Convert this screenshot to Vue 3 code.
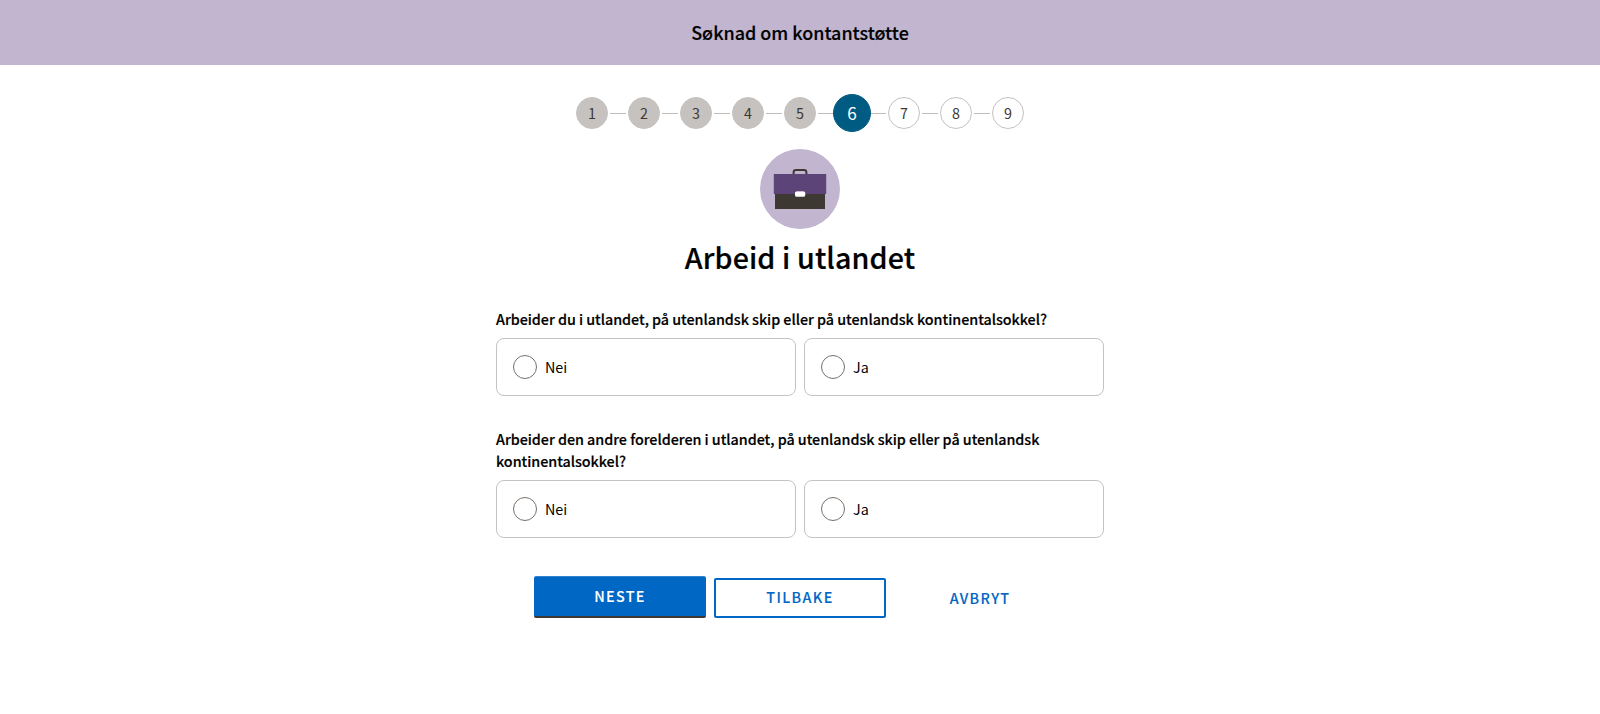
<script setup>
const steps = Array.from({ length: 9 }, (_, i) => i + 1)
const current = 6
const questions = [
  {
    id: 'soker',
    lines: ['Arbeider du i utlandet, på utenlandsk skip eller på utenlandsk kontinentalsokkel?'],
  },
  {
    id: 'forelder',
    lines: ['Arbeider den andre forelderen i utlandet, på utenlandsk skip eller på utenlandsk', 'kontinentalsokkel?'],
  },
]
const answers = ['Nei', 'Ja']
</script>

<template>
  <div class="page">
    <header class="banner"><span class="banner-title">Søknad om kontantstøtte</span></header>
    <main class="content">
      <ol class="stepper">
        <li
          v-for="n in steps"
          :key="n"
          class="step"
          :class="{ done: n < current, active: n === current }"
        >
          <span class="dot">{{ n }}</span>
        </li>
      </ol>

      <svg class="illustration" viewBox="0 0 80 80" aria-hidden="true">
        <circle cx="40" cy="40" r="40" fill="#c1b5d0" />
        <path d="M33.6 26v-2.6q0-2.4 2.4-2.4h8q2.4 0 2.4 2.4V26" fill="none" stroke="#3e3832" stroke-width="2" />
        <rect x="15" y="44" width="50" height="16" rx=".6" fill="#3e3832" />
        <rect x="13.8" y="25" width="52.4" height="20" rx=".6" fill="#5c4378" />
        <rect x="35" y="42.4" width="10.2" height="5.6" rx="1.6" fill="#b9b5b0" />
        <rect x="35" y="42.4" width="10.2" height="4.8" rx="1.6" fill="#fff" />
      </svg>
      <h1 class="heading">Arbeid i utlandet</h1>

      <form class="form">
        <fieldset v-for="q in questions" :key="q.id" class="question">
          <legend class="legend"><span v-for="line in q.lines" :key="line" class="legend-line">{{ line }}</span></legend>
          <div class="options">
            <label v-for="a in answers" :key="a" class="option">
              <input class="radio" type="radio" :name="q.id" />
              <span class="option-text">{{ a }}</span>
            </label>
          </div>
        </fieldset>
      </form>

      <div class="actions">
        <button class="btn primary" type="button">NESTE</button>
        <button class="btn secondary" type="button">TILBAKE</button>
        <button class="btn flat" type="button">AVBRYT</button>
      </div>
    </main>
  </div>
</template>

<style>
body {
  margin: 0;
  background: #fff;
}
</style>

<style scoped>
.page {
  height: 714px;
  overflow: hidden;
  color: #000;
  font-family: "Source Sans Pro", "Noto Sans CJK SC", "Noto Sans", sans-serif;
  font-size: 14.33px;
  font-variant-ligatures: none;
}
.banner {
  height: 65px;
  display: flex;
  align-items: center;
  justify-content: center;
  background: #c1b5d0;
}
.banner-title {
  font-size: 17.95px;
  font-weight: 500;
  line-height: 24px;
  padding-bottom: 1px;
  -webkit-text-stroke: 0.15px currentColor;
}
.content {
  width: 608px;
  margin: 0 auto;
}
.stepper {
  list-style: none;
  display: flex;
  justify-content: center;
  gap: 20px;
  height: 38px;
  margin: 29px 0 0;
  padding: 0;
}
.step {
  position: relative;
  width: 32px;
  display: flex;
  align-items: center;
  justify-content: center;
}
.step:not(:last-child)::after {
  content: "";
  position: absolute;
  left: 34px;
  top: 19px;
  width: 16px;
  height: 1px;
  background: #c0bbb6;
}
.dot {
  box-sizing: border-box;
  flex: none;
  width: 32px;
  height: 32px;
  border: 1px solid #c6c2bf;
  border-radius: 50%;
  background: #fff;
  color: #3e3832;
  line-height: 29px;
  text-align: center;
}
.done .dot {
  background: #c6c2bf;
}
.active .dot {
  position: relative;
  z-index: 1;
  width: 38px;
  height: 38px;
  border-color: #005b82;
  background: #005b82;
  color: #fff;
  font-size: 17.2px;
  line-height: 36px;
}
.illustration {
  display: block;
  width: 80px;
  height: 80px;
  margin: 17px auto 0;
}
.heading {
  margin: 8px 0 0;
  font-size: 28.65px;
  font-weight: 500;
  letter-spacing: 0.12px;
  line-height: 40px;
  text-align: center;
  -webkit-text-stroke: 0.2px currentColor;
}
.form {
  padding-top: 31px;
}
.question {
  margin: 0 0 32px;
  padding: 0;
  border: 0;
  min-width: 0;
}
.legend {
  padding: 0;
  margin-bottom: 8px;
  font-weight: 500;
  letter-spacing: -0.034px;
  line-height: 22px;
  -webkit-text-stroke: 0.18px currentColor;
}
.legend-line {
  display: block;
  white-space: nowrap;
}
.options {
  display: grid;
  grid-template-columns: 1fr 1fr;
  gap: 8px;
}
.option {
  box-sizing: border-box;
  height: 58px;
  display: flex;
  align-items: center;
  gap: 8px;
  padding: 0 16px;
  border: 1px solid #c6c2bf;
  border-radius: 8px;
}
.radio {
  appearance: none;
  box-sizing: border-box;
  width: 24px;
  height: 24px;
  margin: 0;
  border: 1px solid #78706a;
  border-radius: 50%;
  background: #fff;
}
.option-text {
  line-height: 22px;
}
.actions {
  display: flex;
  justify-content: center;
  align-items: flex-end;
  gap: 8px;
  margin-top: 38px;
}
.btn {
  box-sizing: border-box;
  width: 172px;
  height: 40px;
  padding: 0;
  border: 2px solid transparent;
  border-radius: 2px;
  background: transparent;
  color: #0067c5;
  font-family: inherit;
  font-size: 14.33px;
  font-weight: 500;
  letter-spacing: 1.36px;
  line-height: 36px;
  -webkit-text-stroke: 0.1px currentColor;
}
.primary {
  height: 42px;
  padding-bottom: 2px;
  border-width: 1px 0 2px;
  border-color: #3385d1 transparent #3e3832;
  background: #0067c5;
  color: #fff;
}
.secondary {
  padding-bottom: 2px;
  border-color: #0067c5;
  line-height: 34px;
}
</style>
